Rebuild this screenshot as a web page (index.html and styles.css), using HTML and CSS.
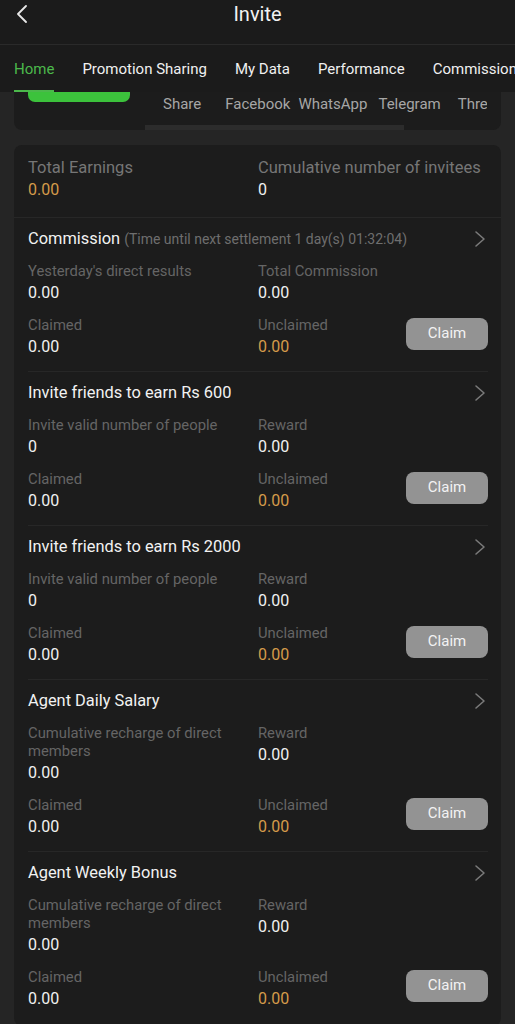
FILE: index.html
```html
<!DOCTYPE html>
<html>
<head>
<meta charset="utf-8">
<link rel="stylesheet" href="styles.css">
</head>
<body>
<header class="topbar">
  <svg class="back" width="12" height="18" viewBox="0 0 12 18"><polyline points="10,1 2,9 10,17" fill="none" stroke="#e8e8e8" stroke-width="1.8" stroke-linecap="round" stroke-linejoin="round"/></svg>
  <div class="title">Invite</div>
</header>
<nav class="tabs">
  <div class="tab active">Home</div>
  <div class="tab">Promotion Sharing</div>
  <div class="tab">My Data</div>
  <div class="tab">Performance</div>
  <div class="tab">Commission</div>
</nav>
<main class="page">
  <section class="share-card">
    <div class="green-btn"></div>
    <div class="share-row">
      <span>Share</span><span>Facebook</span><span>WhatsApp</span><span>Telegram</span><span>Thre</span>
    </div>
    <div class="share-scroll"></div>
  </section>

  <section class="card">
    <div class="summary">
      <div class="sum-col">
        <div class="sum-label">Total Earnings</div>
        <div class="sum-value orange">0.00</div>
      </div>
      <div class="sum-col">
        <div class="sum-label">Cumulative number of invitees</div>
        <div class="sum-value">0</div>
      </div>
    </div>

    <div class="block">
      <div class="block-head">
        <div class="block-title">Commission <span class="note">(Time until next settlement 1 day(s) 01:32:04)</span></div>
        <svg class="chev" width="12" height="18" viewBox="0 0 12 18"><polyline points="2,2 10,9 2,16" fill="none" stroke="#7a7a7a" stroke-width="1.6" stroke-linecap="round" stroke-linejoin="round"/></svg>
      </div>
      <div class="grid">
        <div class="cell"><div class="label">Yesterday's direct results</div><div class="value">0.00</div></div>
        <div class="cell"><div class="label">Total Commission</div><div class="value">0.00</div></div>
        <div class="cell"><div class="label">Claimed</div><div class="value">0.00</div></div>
        <div class="cell"><div class="label">Unclaimed</div><div class="value orange">0.00</div></div>
        <button class="claim">Claim</button>
      </div>
    </div>

    <div class="block">
      <div class="block-head">
        <div class="block-title">Invite friends to earn Rs 600</div>
        <svg class="chev" width="12" height="18" viewBox="0 0 12 18"><polyline points="2,2 10,9 2,16" fill="none" stroke="#7a7a7a" stroke-width="1.6" stroke-linecap="round" stroke-linejoin="round"/></svg>
      </div>
      <div class="grid">
        <div class="cell"><div class="label">Invite valid number of people</div><div class="value">0</div></div>
        <div class="cell"><div class="label">Reward</div><div class="value">0.00</div></div>
        <div class="cell"><div class="label">Claimed</div><div class="value">0.00</div></div>
        <div class="cell"><div class="label">Unclaimed</div><div class="value orange">0.00</div></div>
        <button class="claim">Claim</button>
      </div>
    </div>

    <div class="block">
      <div class="block-head">
        <div class="block-title">Invite friends to earn Rs 2000</div>
        <svg class="chev" width="12" height="18" viewBox="0 0 12 18"><polyline points="2,2 10,9 2,16" fill="none" stroke="#7a7a7a" stroke-width="1.6" stroke-linecap="round" stroke-linejoin="round"/></svg>
      </div>
      <div class="grid">
        <div class="cell"><div class="label">Invite valid number of people</div><div class="value">0</div></div>
        <div class="cell"><div class="label">Reward</div><div class="value">0.00</div></div>
        <div class="cell"><div class="label">Claimed</div><div class="value">0.00</div></div>
        <div class="cell"><div class="label">Unclaimed</div><div class="value orange">0.00</div></div>
        <button class="claim">Claim</button>
      </div>
    </div>

    <div class="block">
      <div class="block-head">
        <div class="block-title">Agent Daily Salary</div>
        <svg class="chev" width="12" height="18" viewBox="0 0 12 18"><polyline points="2,2 10,9 2,16" fill="none" stroke="#7a7a7a" stroke-width="1.6" stroke-linecap="round" stroke-linejoin="round"/></svg>
      </div>
      <div class="grid">
        <div class="cell"><div class="label wrap">Cumulative recharge of direct members</div><div class="value">0.00</div></div>
        <div class="cell"><div class="label">Reward</div><div class="value">0.00</div></div>
        <div class="cell"><div class="label">Claimed</div><div class="value">0.00</div></div>
        <div class="cell"><div class="label">Unclaimed</div><div class="value orange">0.00</div></div>
        <button class="claim">Claim</button>
      </div>
    </div>

    <div class="block last">
      <div class="block-head">
        <div class="block-title">Agent Weekly Bonus</div>
        <svg class="chev" width="12" height="18" viewBox="0 0 12 18"><polyline points="2,2 10,9 2,16" fill="none" stroke="#7a7a7a" stroke-width="1.6" stroke-linecap="round" stroke-linejoin="round"/></svg>
      </div>
      <div class="grid">
        <div class="cell"><div class="label wrap">Cumulative recharge of direct members</div><div class="value">0.00</div></div>
        <div class="cell"><div class="label">Reward</div><div class="value">0.00</div></div>
        <div class="cell"><div class="label">Claimed</div><div class="value">0.00</div></div>
        <div class="cell"><div class="label">Unclaimed</div><div class="value orange">0.00</div></div>
        <button class="claim">Claim</button>
      </div>
    </div>
  </section>
</main>
</body>
</html>
```
FILE: styles.css
```css
* { box-sizing: border-box; }
html, body { margin: 0; padding: 0; }
body {
  background: #252525;
  font-family: Roboto, "Noto Sans", Arial, sans-serif;
  color: #f0f0f0;
  width: 515px;
  height: 1024px;
  overflow: hidden;
}
.topbar {
  height: 45px;
  background: #1b1b1b;
  border-bottom: 1px solid #2a2a2a;
  display: flex;
  justify-content: center;
  align-items: flex-start;
  padding-top: 2px;
  position: relative;
}
.back { position: absolute; left: 16px; top: 5px; }
.title { font-size: 20px; line-height: 24px; color: #f2f2f2; }

.tabs {
  height: 47px;
  background: #1b1b1b;
  display: flex;
  gap: 28px;
  padding-left: 14px;
  white-space: nowrap;
  overflow: hidden;
}
.tab {
  font-size: 15px;
  line-height: 20px;
  padding-top: 14px;
  color: #f0f0f0;
  height: 47px;
}
.tab.active {
  color: #4bb84b;
  border-bottom: 2px solid #4bb84b;
}

.page { padding: 0 14px; }
.share-card {
  background: #1c1c1c;
  height: 38px;
  border-radius: 0 0 8px 8px;
  position: relative;
  overflow: hidden;
}
.green-btn {
  position: absolute;
  left: 14px;
  top: 0;
  width: 102px;
  height: 10px;
  background: #3cc23c;
  border-radius: 0 0 7px 7px;
}
.share-row {
  display: flex;
  padding-left: 128px;
  padding-top: 2px;
  font-size: 15px;
  color: #a6a6a6;
  line-height: 20px;
  height: 22px;
  overflow: hidden;
  width: 473px;
  white-space: nowrap;
}
.share-row span { flex: 0 0 auto; }
.share-row span:nth-child(1) { margin-left: 21px; }
.share-row span:nth-child(2) { margin-left: 24px; }
.share-row span:nth-child(3) { margin-left: 8px; }
.share-row span:nth-child(4) { margin-left: 11px; }
.share-row span:nth-child(5) { margin-left: 17px; }
.share-scroll {
  position: absolute;
  left: 131px;
  top: 33px;
  width: 259px;
  height: 5px;
  background: #2c2c2c;
}

.card {
  margin-top: 15px;
  background: #1c1c1c;
  border-radius: 8px;
  padding-bottom: 4px;
}
.summary {
  display: grid;
  grid-template-columns: 230px 1fr;
  padding: 13px 14px 16px;
  border-bottom: 1px solid #272727;
}
.sum-label { font-size: 16.5px; line-height: 20px; color: #767676; }
.sum-value { font-size: 16px; line-height: 22px; margin-top: 1px; color: #f0f0f0; }
.orange { color: #d49a4a !important; }

.block {
  margin: 0 13px 0 14px;
  padding: 10px 0 13px;
  border-bottom: 1px solid #272727;
}
.block.last { border-bottom: none; padding-bottom: 12px; }
.block-head {
  display: flex;
  justify-content: space-between;
  align-items: center;
  height: 22px;
  margin-bottom: 12px;
}
.block-title { font-size: 16.4px; line-height: 22px; color: #f2f2f2; white-space: nowrap; }
.note { font-size: 14px; color: #6e6e6e; }
.chev { margin-right: 2px; }

.grid {
  display: grid;
  grid-template-columns: 230px 1fr 82px;
  row-gap: 12px;
}
.cell:nth-child(1) { grid-column: 1; grid-row: 1; }
.cell:nth-child(2) { grid-column: 2; grid-row: 1; }
.cell:nth-child(3) { grid-column: 1; grid-row: 2; }
.cell:nth-child(4) { grid-column: 2; grid-row: 2; }
.label { font-size: 14.8px; line-height: 18px; color: #656565; margin-bottom: 2px; white-space: nowrap; }
.label.wrap { width: 205px; white-space: normal; }
.value { font-size: 16px; line-height: 22px; color: #f0f0f0; }
.claim {
  grid-column: 3;
  grid-row: 2;
  align-self: start;
  margin-top: 2px;
  height: 32px;
  width: 82px;
  border: none;
  border-radius: 8px;
  background: #939393;
  color: #f2f2f2;
  font-family: Roboto, "Noto Sans", Arial, sans-serif;
  font-size: 15px;
  padding: 0;
  padding-bottom: 2px;
}
```
